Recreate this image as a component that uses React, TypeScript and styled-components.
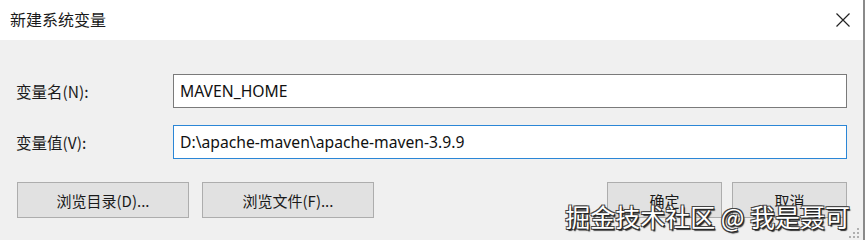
import React from "react";
import styled, { createGlobalStyle } from "styled-components";

const Global = createGlobalStyle`
  html, body { margin: 0; padding: 0; background: #ffffff; }
  #root { width: 865px; height: 240px; }
`;

const Dialog = styled.div`
  position: relative;
  width: 865px;
  height: 240px;
  box-sizing: border-box;
  border-right: 2px solid #8a8a8a;
  display: flex;
  flex-direction: column;
  font-family: "Noto Sans", "Noto Sans CJK SC", sans-serif;
  overflow: hidden;
`;

const TitleBar = styled.div`
  height: 40px;
  flex: none;
  background: #ffffff;
  display: flex;
  align-items: center;
  justify-content: space-between;
  padding: 0 12px 2px 10px;
  box-sizing: border-box;
`;

const Title = styled.div`
  font-family: "Noto Sans CJK SC", sans-serif;
  font-size: 16px;
  color: #1a1a1a;
`;

const CloseIcon = styled.svg`
  width: 16px;
  height: 16px;
  margin-top: 2px;
`;

const Body = styled.div`
  flex: 1;
  background: #f0f0f0;
  padding: 34px 16px 0 16px;
  display: flex;
  flex-direction: column;
`;

const Row = styled.div<{ $gap: number }>`
  display: flex;
  align-items: center;
  margin-bottom: ${(p) => p.$gap}px;
`;

const Label = styled.div`
  width: 157px;
  flex: none;
  font-family: "Noto Sans CJK SC", sans-serif;
  font-size: 15.5px;
  color: #1a1a1a;
`;

const Field = styled.div<{ $focused?: boolean }>`
  width: 674px;
  height: 34px;
  box-sizing: border-box;
  background: #ffffff;
  border: 1px solid ${(p) => (p.$focused ? "#2b86d6" : "#7a7a7a")};
  display: flex;
  align-items: center;
  padding-left: 6px;
  font-family: "Noto Sans", sans-serif;
  font-size: 15.7px;
  color: #111;
`;

const ButtonRow = styled.div`
  display: flex;
  align-items: center;
  padding-left: 1px;
`;

const Group = styled.div<{ $gap: number }>`
  display: flex;
  gap: ${(p) => p.$gap}px;
`;

const Spacer = styled.div`
  flex: 1;
`;

const Button = styled.div<{ $w: number }>`
  width: ${(p) => p.$w}px;
  height: 36px;
  box-sizing: border-box;
  background: #e1e1e1;
  border: 1px solid #adadad;
  display: flex;
  align-items: center;
  justify-content: center;
  font-family: "Noto Sans CJK SC", sans-serif;
  font-size: 15px;
  color: #1a1a1a;
`;

const Watermark = styled.div`
  position: absolute;
  right: 13px;
  bottom: 11px;
  font-family: "Noto Sans CJK SC", sans-serif;
  font-size: 25px;
  line-height: 1;
  color: #ffffff;
  text-shadow: 1px 1px 0 #222, -1px -1px 0 #444, 1px -1px 0 #444, -1px 1px 0 #444, 1.5px 1.5px 1px #333;
  white-space: pre;
`;

const Grip = styled.svg`
  position: absolute;
  right: 4px;
  bottom: 2px;
  width: 12px;
  height: 12px;
`;

export default function App() {
  return (
    <>
      <Global />
      <Dialog>
        <TitleBar>
          <Title>新建系统变量</Title>
          <CloseIcon viewBox="0 0 16 16">
            <path d="M1.5 1.5 L14.5 14.5 M14.5 1.5 L1.5 14.5" stroke="#222" strokeWidth="1.2" fill="none" />
          </CloseIcon>
        </TitleBar>
        <Body>
          <Row $gap={17}>
            <Label>变量名(N):</Label>
            <Field>MAVEN_HOME</Field>
          </Row>
          <Row $gap={23}>
            <Label>变量值(V):</Label>
            <Field $focused>D:\apache-maven\apache-maven-3.9.9</Field>
          </Row>
          <ButtonRow>
            <Group $gap={13}>
              <Button $w={172}>浏览目录(D)...</Button>
              <Button $w={172}>浏览文件(F)...</Button>
            </Group>
            <Spacer />
            <Group $gap={10}>
              <Button $w={115}>确定</Button>
              <Button $w={115}>取消</Button>
            </Group>
          </ButtonRow>
        </Body>
        <Watermark>掘金技术社区 @ 我是聂可</Watermark>
        <Grip viewBox="0 0 12 12">
          {[
            [10, 2],
            [10, 6],
            [6, 6],
            [10, 10],
            [6, 10],
            [2, 10],
          ].map(([x, y], i) => (
            <rect key={i} x={x} y={y} width="2" height="2" fill="#b0b0b0" />
          ))}
        </Grip>
      </Dialog>
    </>
  );
}
